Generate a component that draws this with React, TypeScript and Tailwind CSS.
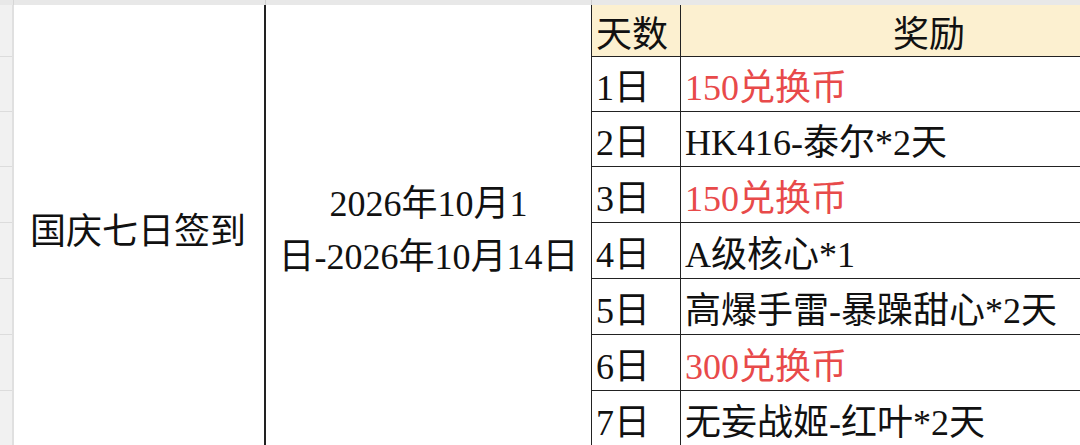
import type { ReactElement } from 'react';

type Reward = {
  day: string;
  text: string;
  highlight?: boolean;
};

const rewards: Reward[] = [
  { day: '1日', text: '150兑换币', highlight: true },
  { day: '2日', text: 'HK416-泰尔*2天' },
  { day: '3日', text: '150兑换币', highlight: true },
  { day: '4日', text: 'A级核心*1' },
  { day: '5日', text: '高爆手雷-暴躁甜心*2天' },
  { day: '6日', text: '300兑换币', highlight: true },
  { day: '7日', text: '无妄战姬-红叶*2天' },
];

const rowHeights = [55, 55, 56, 56, 56, 56, 56];

export default function App(): ReactElement {
  return (
    <div className="flex h-[445px] w-[1080px] flex-col overflow-hidden bg-white font-['Liberation_Serif','Noto_Sans_CJK_SC',serif] text-[36px] text-[#111]">
      {/* column header strip */}
      <div className="flex h-[5px] shrink-0 bg-[#e8e8e8]">
        <div className="w-[14px] border-r border-[#d6d6d6]" />
        <div className="w-[252px] border-r border-[#cfcfcf]" />
        <div className="w-[326px] border-r border-[#cfcfcf]" />
        <div className="flex-1" />
      </div>

      <div className="flex flex-1">
        {/* row header strip */}
        <div className="flex w-[14px] shrink-0 flex-col border-r-2 border-[#e0e0e0] bg-[#f1f1f1]">
          <div className="h-[52px] shrink-0 border-b border-[#dcdcdc]" />
          {rowHeights.map((h, i) => (
            <div key={i} className="shrink-0 border-b border-[#dcdcdc]" style={{ height: h }} />
          ))}
        </div>

        <div className="grid grid-cols-[252px_326px_89px_500px] grid-rows-[52px_55px_55px_56px_56px_56px_56px_56px]">
          <div className="row-span-8 flex items-center justify-center border-r-2 border-[#222] pt-[12px] pr-[2px]">
            国庆七日签到
          </div>
          <div className="row-span-8 flex flex-col items-center justify-center border-r border-[#222] pt-[10px] leading-[53px]">
            <span>2026年10月1</span>
            <span>日-2026年10月14日</span>
          </div>

          <div className="flex items-center border-r border-b border-[#222] bg-[#fcf0d0] pl-[4px] pt-[8px]">
            天数
          </div>
          <div className="flex items-center justify-center border-b border-[#222] bg-[#fcf0d0] pt-[8px] pr-[4px]">
            奖励
          </div>

          {rewards.map((r) => (
            <div key={r.day} className="contents">
              <div className="flex items-center border-r border-b border-[#222] pl-[4px] pt-[8px]">
                {r.day}
              </div>
              <div
                className={
                  r.highlight
                    ? 'flex items-center whitespace-nowrap border-b border-[#222] pl-[4px] pt-[8px] text-[#e84a4a]'
                    : 'flex items-center whitespace-nowrap border-b border-[#222] pl-[4px] pt-[8px]'
                }
              >
                {r.text}
              </div>
            </div>
          ))}
        </div>
      </div>
    </div>
  );
}
